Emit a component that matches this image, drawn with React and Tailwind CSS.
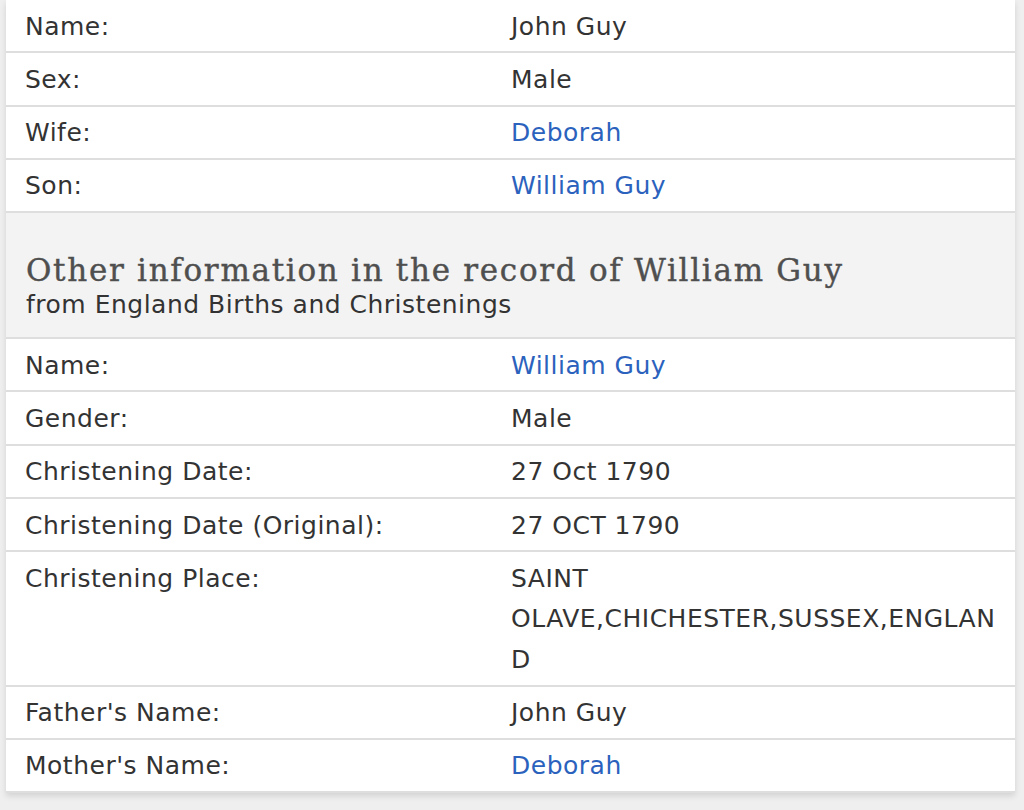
const topRows = [
  { label: 'Name:', value: 'John Guy' },
  { label: 'Sex:', value: 'Male' },
  { label: 'Wife:', value: 'Deborah', link: true },
  { label: 'Son:', value: 'William Guy', link: true },
];

const recordRows = [
  { label: 'Name:', value: 'William Guy', link: true },
  { label: 'Gender:', value: 'Male' },
  { label: 'Christening Date:', value: '27 Oct 1790' },
  { label: 'Christening Date (Original):', value: '27 OCT 1790' },
  { label: 'Christening Place:', value: 'SAINT OLAVE,CHICHESTER,SUSSEX,ENGLAND' },
  { label: "Father's Name:", value: 'John Guy' },
  { label: "Mother's Name:", value: 'Deborah', link: true },
];

function Row({ row }) {
  return (
    <div className="flex border-b-2 border-[#dedede] bg-white">
      <div className="w-[505px] shrink-0 pb-[4.2px] pl-[19px] pt-[6.6px]">{row.label}</div>
      <div className={`min-w-0 flex-1 break-words pb-[4.2px] pr-[10px] pt-[6.6px] ${row.link ? 'text-[#2b62bd]' : ''}`}>
        {row.value}
      </div>
    </div>
  );
}

export default function App() {
  return (
    <div className="min-h-[810px] bg-[#efefef] pl-[6px] pr-[9px]" style={{ fontFamily: '"DejaVu Sans", Verdana, sans-serif' }}>
      <div className="bg-white text-[25px] leading-[40.5px] tracking-[0.5px] text-[#333] shadow-[0_3px_6px_rgba(0,0,0,0.12)]">
        {topRows.map((row) => (
          <Row key={row.label} row={row} />
        ))}
        <div className="border-b-2 border-[#dedede] bg-[#f3f3f3] px-[20px] pb-[17px] pt-[38px]">
          <h2
            className="text-[31px] leading-[38px] tracking-[1.7px] text-[#4f4f4f] [-webkit-text-stroke:0.4px_#4f4f4f]"
            style={{ fontFamily: '"DejaVu Serif", serif' }}
          >
            Other information in the record of William Guy
          </h2>
          <p className="mt-[1px] leading-[30px]">from England Births and Christenings</p>
        </div>
        {recordRows.map((row) => (
          <Row key={row.label} row={row} />
        ))}
      </div>
    </div>
  );
}
